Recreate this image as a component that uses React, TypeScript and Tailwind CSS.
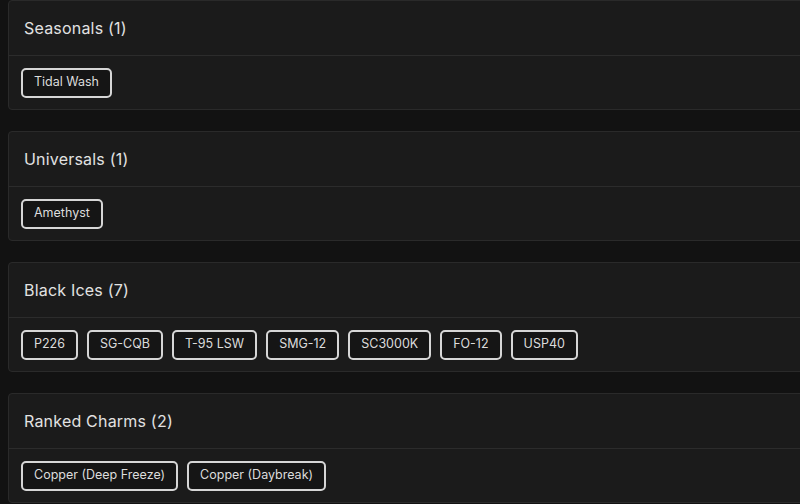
import React from 'react';

const sections = [
  { title: 'Seasonals', items: ['Tidal Wash'] },
  { title: 'Universals', items: ['Amethyst'] },
  { title: 'Black Ices', items: ['P226', 'SG-CQB', 'T-95 LSW', 'SMG-12', 'SC3000K', 'FO-12', 'USP40'] },
  { title: 'Ranked Charms', items: ['Copper (Deep Freeze)', 'Copper (Daybreak)'] },
];

const App = () => {
  return (
    <div
      className="w-[800px] h-[504px] overflow-hidden bg-[#121212] pl-2"
      style={{ fontFamily: 'Inter, "Open Sans", sans-serif' }}
    >
      <div className="flex flex-col gap-[21px] w-[820px]">
        {sections.map((section) => (
          <div key={section.title} className="bg-[#1b1b1b] border border-[#2a2a2a] rounded-sm">
            <div className="h-[55px] flex items-center px-[15px] border-b border-[#2c2c2c]">
              <h3 className="text-[16px] font-normal text-[#e2e2e2] tracking-[0.2px]">
                {section.title} ({section.items.length})
              </h3>
            </div>
            <div className="h-[53px] flex items-center gap-[9px] px-3">
              {section.items.map((item) => (
                <span
                  key={item}
                  className="h-[30px] flex items-center px-[11px] border-2 border-[#d6d6d6] rounded-[5px] bg-[#151515] text-[12.5px] text-[#dcdcdc]"
                >
                  {item}
                </span>
              ))}
            </div>
          </div>
        ))}
      </div>
    </div>
  );
};

export default App;
